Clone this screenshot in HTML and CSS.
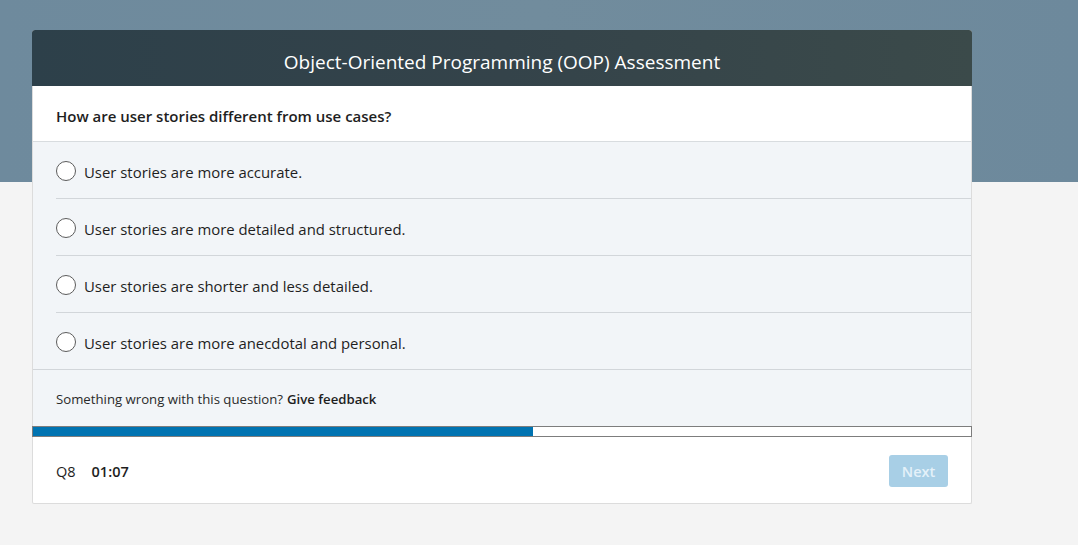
FILE: index.html
```html
<!DOCTYPE html>
<html lang="en">
<head>
<meta charset="utf-8">
<title>OOP Assessment</title>
<link rel="stylesheet" href="styles.css">
</head>
<body>
<div class="hero"></div>
<main class="page">
  <section class="card">
    <header class="card-head">Object-Oriented Programming (OOP) Assessment</header>
    <div class="question">How are user stories different from use cases?</div>
    <ul class="options">
      <li class="option"><span class="radio"></span><span class="opt-text">User stories are more accurate.</span></li>
      <li class="option"><span class="radio"></span><span class="opt-text">User stories are more detailed and structured.</span></li>
      <li class="option"><span class="radio"></span><span class="opt-text">User stories are shorter and less detailed.</span></li>
      <li class="option"><span class="radio"></span><span class="opt-text">User stories are more anecdotal and personal.</span></li>
    </ul>
    <div class="feedback">Something wrong with this question? <b>Give feedback</b></div>
    <div class="progress"><div class="progress-fill" style="width:53.3%"></div></div>
    <footer class="card-foot">
      <div class="meta"><span class="qnum">Q8</span><span class="timer">01:07</span></div>
      <button class="next" type="button">Next</button>
    </footer>
  </section>
</main>
</body>
</html>
```
FILE: styles.css
```css
* { box-sizing: border-box; }
html, body { margin: 0; padding: 0; }
body {
  background: #f4f4f4;
  font-family: "Open Sans", "Noto Sans", sans-serif;
  color: #1f1f1f;
  height: 545px;
  overflow: hidden;
  position: relative;
}
.hero {
  position: absolute;
  left: 0; top: 0; right: 0;
  height: 182px;
  background: linear-gradient(90deg, #6e8a9d 0%, #718c9d 50%, #6d899c 100%);
}
.page {
  position: relative;
  padding: 30px 0 0 32px;
}
.card {
  width: 940px;
  background: #fff;
  border: 1px solid #dcdcdc;
  border-top: none;
  border-radius: 3px 3px 2px 2px;
}
.card-head {
  height: 56px;
  margin: 0 -1px;
  display: flex;
  align-items: center;
  justify-content: center;
  background: linear-gradient(90deg, #2d404a 0%, #34434a 50%, #3b4a4a 100%);
  color: #fff;
  font-size: 19px;
  border-radius: 3px 3px 0 0;
  padding-top: 7px;
}
.question {
  height: 56px;
  display: flex;
  align-items: center;
  padding: 5px 23px 0;
  font-size: 15px;
  font-weight: 600;
  color: #1e1e1e;
  border-bottom: 1px solid #d8dcdf;
}
.options {
  list-style: none;
  margin: 0;
  padding: 0;
  background: #f2f5f8;
}
.option {
  height: 57px;
  display: flex;
  align-items: center;
  margin-left: 23px;
  border-bottom: 1px solid #d2d6da;
  font-size: 14.9px;
  color: #1e1e1e;
  padding-top: 1px;
}
.option:last-child {
  margin-left: 0;
  padding-left: 23px;
}
.radio {
  width: 20px;
  height: 20px;
  border: 1px solid #5c5c5c;
  border-radius: 50%;
  background: #fff;
  margin-right: 8px;
  flex: none;
}
.opt-text { position: relative; top: 1px; }
.feedback {
  height: 56px;
  display: flex;
  align-items: center;
  padding: 2px 23px 0;
  background: #f2f5f8;
  font-size: 13.2px;
  color: #2a2a2a;
}
.feedback b { font-weight: 600; margin-left: 4px; color: #1e1e1e; }
.progress {
  height: 11px;
  margin: 0 -1px;
  border: 1px solid #7d7d7d;
  background: #fff;
}
.progress-fill {
  height: 100%;
  background: #0073b1;
}
.card-foot {
  height: 66px;
  display: flex;
  align-items: center;
  justify-content: space-between;
  padding: 2px 23px 0;
}
.meta { display: flex; align-items: center; font-size: 14.5px; color: #1e1e1e; }
.qnum { margin-right: 16px; }
.timer { font-weight: 600; }
.next {
  width: 59px;
  height: 32px;
  border: none;
  border-radius: 3px;
  background: #a8cfe6;
  color: #e4f1f9;
  font-family: inherit;
  font-size: 14.5px;
  font-weight: 600;
  padding: 0;
}
```
